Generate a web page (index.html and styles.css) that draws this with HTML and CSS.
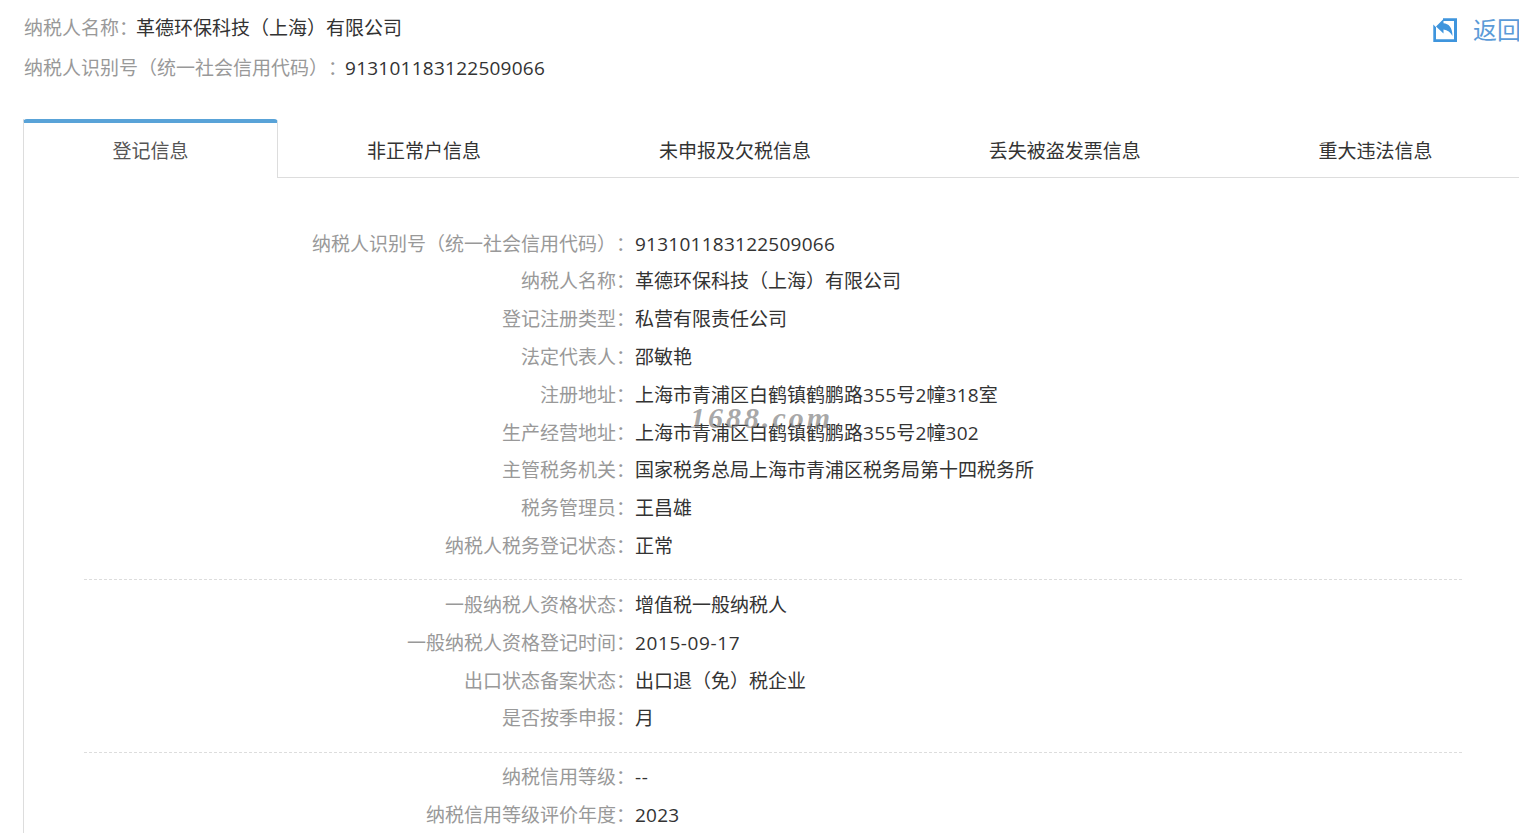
FILE: index.html
```html
<!DOCTYPE html>
<html lang="zh-CN">
<head>
    <meta charset="UTF-8">
    <meta name="viewport" content="width=device-width, initial-scale=1.0">
    <title>纳税人信息</title>
    <link rel="stylesheet" href="styles.css">
</head>
<body>
    <div class="header">
        <div class="summary">
            <div class="summary-row"><span class="label">纳税人名称：</span><span class="value">革德环保科技（上海）有限公司</span></div>
            <div class="summary-row"><span class="label">纳税人识别号（统一社会信用代码）：</span><span class="value num">913101183122509066</span></div>
        </div>
        <a class="back" href="#">
            <svg class="back-icon" viewBox="0 0 24 24" width="24" height="24">
                <path fill="#3f95dd" d="M10 0.3h14V24H0.3V6.5L3 9.2v12.1h18V3H10z"/>
                <path fill="#3f95dd" d="M3 8.5L10.5 1v4.2c5 0.3 9 4 9 12.8-2-4-5-6.2-9-6.6V15.5z"/>
            </svg>
            <span>返回</span>
        </a>
    </div>

    <div class="panel">
        <ul class="tabs">
            <li class="tab active">登记信息</li>
            <li class="tab">非正常户信息</li>
            <li class="tab">未申报及欠税信息</li>
            <li class="tab">丢失被盗发票信息</li>
            <li class="tab">重大违法信息</li>
        </ul>

        <div class="details">
            <div class="group">
                <div class="row"><span class="label">纳税人识别号（统一社会信用代码）：</span><span class="value num">913101183122509066</span></div>
                <div class="row"><span class="label">纳税人名称：</span><span class="value">革德环保科技（上海）有限公司</span></div>
                <div class="row"><span class="label">登记注册类型：</span><span class="value">私营有限责任公司</span></div>
                <div class="row"><span class="label">法定代表人：</span><span class="value">邵敏艳</span></div>
                <div class="row"><span class="label">注册地址：</span><span class="value">上海市青浦区白鹤镇鹤鹏路<span class="num">355</span>号<span class="num">2</span>幢<span class="num">318</span>室</span></div>
                <div class="row"><span class="label">生产经营地址：</span><span class="value">上海市青浦区白鹤镇鹤鹏路<span class="num">355</span>号<span class="num">2</span>幢<span class="num">302</span></span></div>
                <div class="row"><span class="label">主管税务机关：</span><span class="value">国家税务总局上海市青浦区税务局第十四税务所</span></div>
                <div class="row"><span class="label">税务管理员：</span><span class="value">王昌雄</span></div>
                <div class="row"><span class="label">纳税人税务登记状态：</span><span class="value">正常</span></div>
            </div>
            <div class="group">
                <div class="row"><span class="label">一般纳税人资格状态：</span><span class="value">增值税一般纳税人</span></div>
                <div class="row"><span class="label">一般纳税人资格登记时间：</span><span class="value date">2015-09-17</span></div>
                <div class="row"><span class="label">出口状态备案状态：</span><span class="value">出口退（免）税企业</span></div>
                <div class="row"><span class="label">是否按季申报：</span><span class="value">月</span></div>
            </div>
            <div class="group">
                <div class="row"><span class="label">纳税信用等级：</span><span class="value date">--</span></div>
                <div class="row"><span class="label">纳税信用等级评价年度：</span><span class="value num">2023</span></div>
            </div>
        </div>
    </div>

    <div class="watermark">1688.com</div>
</body>
</html>
```

FILE: styles.css
```css
html, body {
    height: 833px;
    overflow: hidden;
}
body {
    margin: 0;
    position: relative;
    background-color: white;
    color: #333;
    font-family: "Open Sans", "Noto Sans CJK SC", sans-serif;
    font-size: 19px;
    text-spacing-trim: space-all;
}
.label {
    color: #999;
}
.value {
    color: #333;
}
.num {
    letter-spacing: 0.25px;
}
.date {
    letter-spacing: 0.6px;
}
.header {
    display: flex;
    justify-content: space-between;
    height: 119px;
    padding-left: 24px;
    box-sizing: border-box;
}
.summary {
    padding-top: 9px;
}
.summary-row {
    height: 40px;
    line-height: 39px;
}
.summary-row .value {
    margin-left: -2px;
}
.back {
    display: flex;
    align-items: flex-start;
    gap: 16px;
    width: 86px;
    margin-top: 18px;
    color: #5b9bd8;
    font-size: 24px;
    line-height: 24px;
    text-decoration: none;
    white-space: nowrap;
}
.back-icon {
    flex-shrink: 0;
}
.panel {
    width: 1540px;
    margin-left: 23px;
    border-left: 1px solid #ddd;
}
.tabs {
    display: flex;
    height: 59px;
    margin: 0;
    padding: 0;
    list-style: none;
    border-bottom: 1px solid #ddd;
    box-sizing: border-box;
}
.tab {
    padding: 4px 88.9px 0;
    line-height: 56px;
    color: #333;
}
.tab.active {
    position: relative;
    height: 59px;
    box-sizing: border-box;
    margin-left: -1px;
    padding: 0 88.6px;
    line-height: 57px;
    color: #555;
    background-color: white;
    border: 1px solid #ddd;
    border-top: 4px solid #59a3d8;
    border-bottom: none;
    border-radius: 4px 4px 0 0;
}
.details {
    padding: 47.6px 0 0 60px;
}
.group {
    width: 1378px;
    padding-bottom: 13.6px;
    margin-bottom: 6px;
    border-bottom: 1px dashed #ddd;
}
.group:first-child {
    margin-bottom: 6.6px;
}
.group:last-child {
    border-bottom: none;
}
.row {
    display: grid;
    grid-template-columns: 551px 1fr;
    height: 37.8px;
    line-height: 37.8px;
}
.row .label {
    text-align: right;
}
.watermark {
    position: absolute;
    left: 690px;
    top: 401px;
    color: rgba(110, 110, 110, 0.6);
    font-family: "Liberation Serif", serif;
    font-size: 30px;
    font-style: italic;
    font-weight: bold;
    letter-spacing: 3px;
}
```
